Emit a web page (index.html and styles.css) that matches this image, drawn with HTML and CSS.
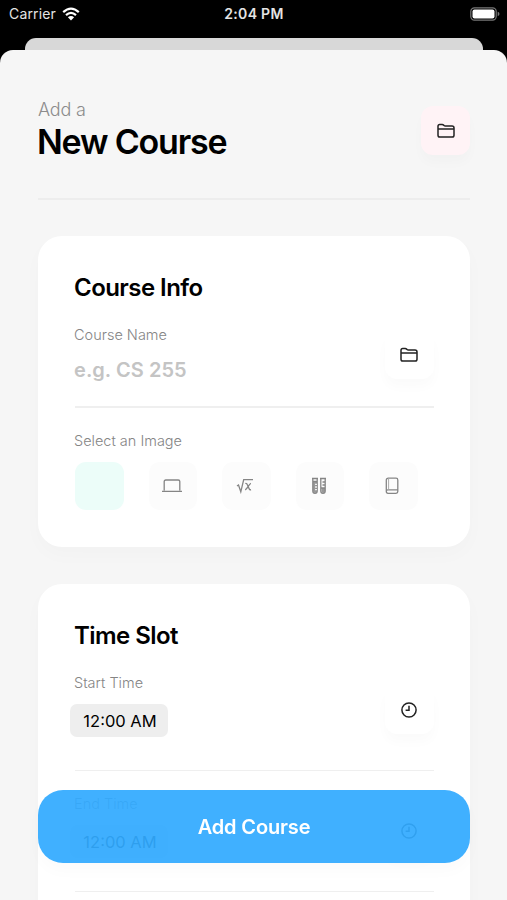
FILE: index.html
```
<!DOCTYPE html>
<html lang="en">

<head>
	<title>New Course</title>
	<meta charset="UTF-8">
	<meta name="viewport" content="width=device-width, initial-scale=1.0">
	<link rel="stylesheet" href="styles.css">
</head>

<body>
	<!-- shared icons -->
	<svg class="defs" width="0" height="0">
		<symbol id="folder" viewBox="0 0 18 16">
			<path d="M1 12.2V3.2Q1 1.5 2.7 1.5H5.2Q6 1.5 6.6 2.1L7 2.5Q7.5 3 8.3 3H15Q17 3 17 5V12.2Q17 14 15.2 14H2.8Q1 14 1 12.2ZM1 6H17"/>
		</symbol>
		<symbol id="clock" viewBox="0 0 16 16">
			<circle cx="8" cy="8" r="7.1"/>
			<path d="M8 3.8V8.2H4.6"/>
		</symbol>
	</svg>

	<div class="statusbar">
		<div class="carrier">
			<span>Carrier</span>
			<svg class="wifi" viewBox="0 0 18 14">
				<path d="M1.2 5.1Q9 -2 16.8 5.1M4 8.1Q9 3.7 14 8.1"/>
				<path class="dot" d="M9 13.6L5.9 10.3Q9 7.8 12.1 10.3Z"/>
			</svg>
		</div>
		<div class="clocktext">2:04 PM</div>
		<div class="battery">
			<svg viewBox="0 0 30 14">
				<rect class="shell" x=".8" y=".8" width="25.4" height="12.4" rx="3.6"/>
				<rect class="level" x="2.5" y="2.5" width="22" height="9" rx="2"/>
				<path class="tip" d="M27.7 4.8Q29.5 5.4 29.5 7T27.7 9.2Z"/>
			</svg>
		</div>
	</div>

	<div class="backsheet"></div>

	<div class="sheet">
		<div class="header">
			<div>
				<div class="pretitle">Add a</div>
				<h1>New Course</h1>
			</div>
			<div class="tile pink"><svg class="icon"><use href="#folder"/></svg></div>
		</div>

		<div class="card">
			<h2>Course Info</h2>
			<div class="field name">
				<div>
					<div class="label">Course Name</div>
					<div class="placeholder">e.g. CS 255</div>
				</div>
				<div class="tile"><svg class="icon"><use href="#folder"/></svg></div>
			</div>
			<div class="label select">Select an Image</div>
			<div class="images">
				<div class="option active"></div>
				<div class="option">
					<svg width="22" height="16" viewBox="0 0 22 16">
						<path d="M3.2 12.6V3.6Q3.2 2 4.8 2H17.2Q18.8 2 18.8 3.6V12.6M1 13.4H21"/>
					</svg>
				</div>
				<div class="option">
					<svg width="18" height="16" viewBox="0 0 18 16">
						<path d="M1 8L2.5 7L4.8 13.8L7.7 1.6H17M9.3 5.5Q10.8 5 11.5 7L12.9 10.3Q13.6 12.2 15 11.6M15 5.3Q14 5.4 12.2 8.3T9.2 11.8"/>
					</svg>
				</div>
				<div class="option">
					<svg width="16" height="18" viewBox="0 0 16 18">
						<path class="fill" d="M2 5H6V14Q6 16 4 16T2 14ZM10.5 11H14V14Q14 16 12.2 16T10.5 14Z"/>
						<path d="M1 1.5H7M1.8 2V14Q1.8 16.3 4 16.3T6.2 14V2M9 1.5H15M9.8 2V14Q9.8 16.3 12 16.3T14.2 14V2M1.8 4.5H6M11.5 5H14M11.5 8H14M9.8 11H14"/>
						<path class="ticks" d="M4 7.4H6M4 10H6M4 12.6H6"/>
					</svg>
				</div>
				<div class="option">
					<svg width="14" height="18" viewBox="0 0 14 18">
						<path d="M1.3 14.4V3.3Q1.3 1.2 3.4 1.2H11Q12.8 1.2 12.8 3V14.5Q12.8 16.3 11 16.3H3Q1.3 16.3 1.3 14.5T3 12.8H12.8"/>
						<path class="spine" d="M3.6 1.5V12.6"/>
					</svg>
				</div>
			</div>
		</div>

		<div class="card">
			<h2>Time Slot</h2>
			<div class="field time">
				<div>
					<div class="label">Start Time</div>
					<div class="pill">12:00 AM</div>
				</div>
				<div class="tile"><svg class="icon"><use href="#clock"/></svg></div>
			</div>
			<div class="field time">
				<div>
					<div class="label">End Time</div>
					<div class="pill">12:00 AM</div>
				</div>
				<div class="tile"><svg class="icon"><use href="#clock"/></svg></div>
			</div>
		</div>
	</div>

	<div class="addbutton">Add Course</div>
</body>

</html>
```

FILE: styles.css
```
*{
    box-sizing: border-box;
}
body{
    margin: 0;
    height: 900px;
    overflow: hidden;
    background-color: black;
    font-family: Inter, "Liberation Sans", sans-serif;
    color: black;
}
h1, h2{
    margin: 0;
    font-weight: 600;
}
svg{
    display: block;
    fill: none;
    stroke: currentColor;
}
.defs{
    position: absolute;
}

/* status bar */
.statusbar{
    display: grid;
    grid-template-columns: 1fr auto 1fr;
    align-items: center;
    height: 38px;
    padding: 0 7px 11px 9px;
    color: #e4e4e4;
    font-size: 14px;
}
.carrier{
    display: flex;
    align-items: center;
    gap: 6px;
    letter-spacing: 0.15px;
}
.wifi{
    width: 18px;
    height: 14px;
    color: white;
    stroke-width: 2.2;
}
.wifi .dot{
    fill: white;
    stroke: none;
}
.clocktext{
    margin-right: 1px;
    font-weight: 600;
    letter-spacing: 0.3px;
}
.battery{
    justify-self: end;
}
.battery svg{
    width: 30px;
    height: 14px;
}
.battery .shell{
    stroke: #777;
    stroke-width: 1.2;
}
.battery .level{
    fill: white;
    stroke: none;
}
.battery .tip{
    fill: #777;
    stroke: none;
}

/* sheets */
.backsheet{
    height: 12px;
    margin: 0 24px 0 25px;
    border-radius: 11px 11px 0 0;
    background-color: #d8d8d8;
}
.sheet{
    height: 850px;
    padding: 0 37px 0 38px;
    overflow: hidden;
    border-radius: 13px 13px 0 0;
    background-color: #f6f6f6;
}
.header{
    display: flex;
    justify-content: space-between;
    align-items: flex-start;
    height: 150px;
    margin-bottom: 36px;
    padding-top: 49px;
    border-bottom: 2px solid #ededed;
}
.pretitle{
    font-size: 18px;
    font-weight: 300;
    letter-spacing: -0.2px;
    line-height: 22px;
    color: #8c8c8c;
}
h1{
    margin-left: -1px;
    font-size: 34px;
    letter-spacing: -1.2px;
    line-height: 42px;
}
h2{
    margin-left: -1px;
    padding-top: 1px;
    font-size: 24px;
    letter-spacing: -0.55px;
    line-height: 29px;
}
.tile{
    display: flex;
    align-items: center;
    justify-content: center;
    width: 49px;
    height: 49px;
    padding-right: 1px;
    border-radius: 12px;
    background-color: white;
    color: #222;
    box-shadow: 0 8px 12px rgba(0, 0, 0, 0.02);
}
.pink{
    margin-top: 7px;
    padding-right: 0;
    background-color: #fff3f6;
}
.icon{
    width: 18px;
    height: 16px;
    stroke-width: 1.5;
}

/* cards */
.card{
    margin-bottom: 37px;
    padding: 36px 36px 37px 37px;
    border-radius: 24px;
    background-color: white;
    box-shadow: 0 8px 20px rgba(0, 0, 0, 0.02);
}
.label{
    margin-left: -1px;
    font-size: 14.5px;
    font-weight: 300;
    line-height: 20px;
    color: #858585;
}
.field{
    display: flex;
    justify-content: space-between;
    border-bottom: 2px solid #efefef;
}
.name{
    height: 83px;
    margin-top: 23px;
}
.name .tile{
    margin-top: 5px;
}
.placeholder{
    margin-top: 13px;
    margin-left: -1px;
    font-size: 20px;
    font-weight: 600;
    letter-spacing: 0.05px;
    line-height: 24px;
    color: #c4c4c4;
}
.select{
    margin-top: 23px;
}
.images{
    display: flex;
    gap: 25px;
    margin-top: 11px;
}
.option{
    display: flex;
    align-items: center;
    justify-content: center;
    width: 48.5px;
    height: 48px;
    padding-right: 2px;
    border-radius: 11px;
    background-color: #fcfcfc;
    color: #858585;
    stroke-width: 1.3;
}
.option.active{
    background-color: #ecfdf9;
}
.option .fill{
    fill: #999;
    stroke: none;
}
.option .ticks{
    stroke: #eee;
}
.option .spine{
    stroke: #aaa;
    stroke-width: 1;
}
.time{
    height: 98px;
    margin-top: 23px;
    border-bottom-width: 1.5px;
}
.time .tile{
    margin-top: 12px;
}
.pill{
    width: 98px;
    height: 33px;
    margin: 11px 0 0 -5px;
    padding-left: 2px;
    border-radius: 7px;
    background-color: #eeeeee;
    font-size: 16.5px;
    line-height: 34px;
    text-align: center;
}

.addbutton{
    position: fixed;
    left: 38px;
    right: 37px;
    top: 790px;
    height: 73px;
    border-radius: 25px;
    background-color: rgba(49, 170, 255, 0.93);
    color: white;
    font-size: 20px;
    font-weight: 600;
    letter-spacing: -0.15px;
    line-height: 74px;
    text-align: center;
    box-shadow: 0 8px 16px rgba(0, 0, 0, 0.02);
}
```
